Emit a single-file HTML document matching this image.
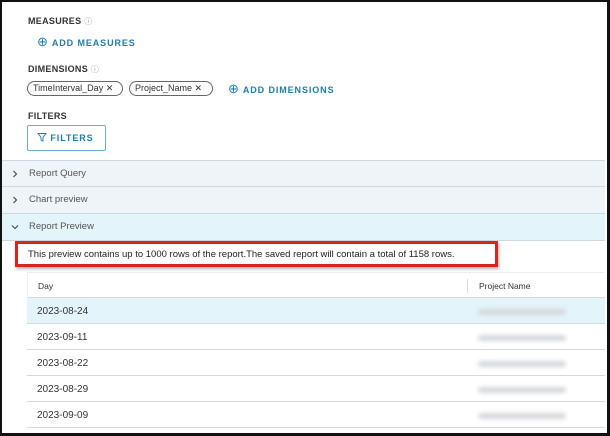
<!DOCTYPE html>
<html><head><style>
*{margin:0;padding:0;box-sizing:border-box}
body{width:610px;height:436px;overflow:hidden;background:#fff;font-family:"Liberation Sans",sans-serif;position:relative}
.frame{position:absolute;left:0;top:0;width:610px;height:436px;border:2px solid #111;border-right-width:3px;border-bottom-width:3px}
.a{position:absolute}
.lbl{font-size:9px;font-weight:bold;color:#333;letter-spacing:.3px}
.link{font-size:9px;font-weight:bold;color:#1a7fb0;letter-spacing:.9px}
.chip{position:absolute;top:81px;height:15px;border:1px solid #666;border-radius:8px;font-size:9px;color:#333;line-height:13px;padding-left:5px}
.acc{position:absolute;left:2px;width:603px;height:27px;border-bottom:1px solid #cfd8de;font-size:9.5px;color:#555;line-height:26px;padding-left:27px}
.acc svg{position:absolute;left:9px;top:9px}
.row{position:absolute;left:27px;width:578px;height:26px;border-bottom:1px solid #d8d8d8;font-size:10px;color:#333;line-height:27px;padding-left:10px}
.blur{position:absolute;left:478px;width:88px;height:6px;background:#d4d8dc;filter:blur(2px);border-radius:3px}
</style></head><body>
<div class="a lbl" style="left:28px;top:16px">MEASURES <span style="font-weight:normal;color:#999;font-size:8px">ⓘ</span></div>
<div class="a link" style="left:37px;top:34px"><span style="font-size:13px;font-weight:normal">⊕</span> ADD MEASURES</div>
<div class="a lbl" style="left:28px;top:64px">DIMENSIONS <span style="font-weight:normal;color:#999;font-size:8px">ⓘ</span></div>
<div class="chip" style="left:27px;width:96px">TimeInterval_Day ✕</div>
<div class="chip" style="left:129px;width:84px">Project_Name ✕</div>
<div class="a link" style="left:228px;top:81px"><span style="font-size:13px;font-weight:normal">⊕</span> ADD DIMENSIONS</div>
<div class="a lbl" style="left:28px;top:111px">FILTERS</div>
<div class="a link" style="left:27px;top:125px;width:79px;height:26px;border:1px solid #6aaed0;border-radius:2px;line-height:24px;padding-left:9px"><svg width="10" height="10" viewBox="0 0 10 10" style="vertical-align:-1px"><path d="M1 1.5H9L6 5.2V9L4 8V5.2Z" fill="none" stroke="#1a7fb0" stroke-width="0.9"/></svg> FILTERS</div>
<div class="acc" style="top:160px;background:#eef4f8;border-top:1px solid #cfd8de"><svg width="8" height="8" viewBox="0 0 8 8"><path d="M2.5 1L5.5 4L2.5 7" fill="none" stroke="#444" stroke-width="1.1"/></svg>Report Query</div>
<div class="acc" style="top:187px;background:#eef4f8"><svg width="8" height="8" viewBox="0 0 8 8"><path d="M2.5 1L5.5 4L2.5 7" fill="none" stroke="#444" stroke-width="1.1"/></svg>Chart preview</div>
<div class="acc" style="top:214px;background:#e3f4fb"><svg width="8" height="8" viewBox="0 0 8 8"><path d="M1 2.5L4 5.5L7 2.5" fill="none" stroke="#444" stroke-width="1.1"/></svg>Report Preview</div>
<div class="a" style="left:15px;top:241px;width:483px;height:26px;border:3px solid #d9261c;font-size:9.5px;color:#222;line-height:22px;padding-left:10px;box-shadow:1px 2px 3px rgba(0,0,0,.3)">This preview contains up to 1000 rows of the report.The saved report will contain a total of 1158 rows.</div>
<div class="row" style="top:272px;font-size:8.5px;border-top:1px solid #eee;border-left:1px solid #eee">Day<span class="a" style="left:439px;top:6px;height:14px;border-left:1px solid #ddd"></span><span class="a" style="left:451px">Project Name</span></div>
<div class="row" style="top:298px;background:#e3f4fb">2023-08-24</div>
<div class="row" style="top:324px">2023-09-11</div>
<div class="row" style="top:350px">2023-08-22</div>
<div class="row" style="top:376px">2023-08-29</div>
<div class="row" style="top:402px">2023-09-09</div>
<div class="blur" style="top:309px"></div><div class="blur" style="top:335px"></div><div class="blur" style="top:361px"></div><div class="blur" style="top:387px"></div><div class="blur" style="top:413px"></div>
<div class="frame"></div>
</body></html>
